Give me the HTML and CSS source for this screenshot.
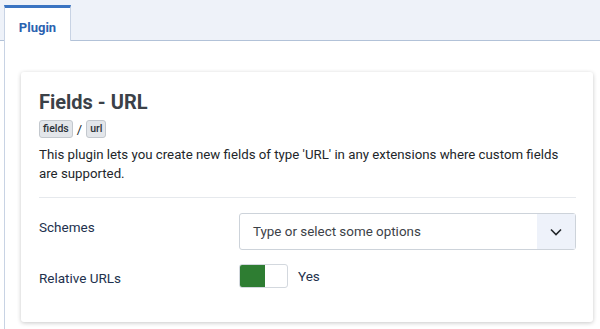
FILE: index.html
```html
<!DOCTYPE html>
<html lang="en">
<head>
    <meta charset="UTF-8">
    <title>Fields - URL</title>
    <link rel="stylesheet" href="styles.css">
</head>
<body>
    <div class="tabs">
        <div class="tab active">Plugin</div>
    </div>
    <div class="panel">
        <div class="card">
            <h1>Fields - URL</h1>
            <div class="badges">
                <span class="badge">fields</span>
                <span class="sep">/</span>
                <span class="badge">url</span>
            </div>
            <p class="desc">This plugin lets you create new fields of type 'URL' in any extensions where custom fields are supported.</p>
            <hr>
            <div class="row">
                <label>Schemes</label>
                <div class="select">
                    <span>Type or select some options</span>
                    <span class="caret">
                        <svg width="12" height="8" viewBox="0 0 12 8"><path d="M1 1.5 6 6.5 11 1.5" fill="none" stroke="#22262a" stroke-width="1.6"/></svg>
                    </span>
                </div>
            </div>
            <div class="row">
                <label>Relative URLs</label>
                <div class="switch-wrap">
                    <span class="switch"><span class="on"></span></span>
                    <span class="yes">Yes</span>
                </div>
            </div>
        </div>
    </div>
</body>
</html>
```

FILE: styles.css
```css
* {
    box-sizing: border-box;
}

body {
    margin: 0;
    font-family: Roboto, "Liberation Sans", sans-serif;
    background: #fff;
    color: #22262a;
}

.tabs {
    display: flex;
    height: 41px;
    padding: 5px 0 0 4px;
    background: #eef2f9;
    border-bottom: 1px solid #b2c2d8;
}

.tab {
    width: 67px;
    height: 36px;
    background: #fff;
    border-top: 3px solid #3a74c2;
    border-left: 1px solid #c8d3e4;
    border-right: 1px solid #c8d3e4;
    color: #2a62b0;
    font-weight: bold;
    font-size: 13px;
    text-align: center;
    padding-top: 12px;
}

.panel {
    margin-left: 4px;
    border-left: 1px solid #c8d3e4;
    padding: 31px 7px 8px 16px;
}

.card {
    background: #fff;
    border-radius: 3px;
    box-shadow: 0 1px 4px rgba(0, 0, 0, 0.22);
    padding: 18px 17px 34px 18px;
}

h1 {
    margin: 0;
    font-size: 20px;
    line-height: 24px;
    color: #3b4148;
}

.badges {
    display: flex;
    align-items: center;
    gap: 4px;
    margin-top: 6px;
}

.badge {
    font-size: 10.5px;
    font-weight: 500;
    line-height: 14px;
    padding: 1px 3px;
    background: #e3e6ea;
    border: 1px solid #c3c8ce;
    border-radius: 3px;
    color: #2c3238;
}

.sep {
    font-size: 13px;
    color: #22262a;
}

.desc {
    margin: 7px 0 0;
    font-size: 13.25px;
    line-height: 19px;
    color: #22262a;
}

hr {
    border: none;
    border-top: 1px solid #e6e9ed;
    margin: 14px 0 15px;
}

.row {
    display: flex;
    align-items: flex-start;
    margin-bottom: 14px;
}

.row:last-child {
    margin-bottom: 0;
}

label {
    width: 200px;
    padding-top: 4px;
    font-size: 13.5px;
    line-height: 20px;
    color: #22314d;
}

.select {
    flex: 1;
    display: flex;
    align-items: center;
    height: 37px;
    border: 1px solid #cdd3da;
    border-radius: 3px;
    font-size: 13.4px;
    color: #3c4147;
}

.select span:first-child {
    flex: 1;
    padding-left: 13px;
}

.caret {
    width: 38px;
    height: 100%;
    background: #eef2fa;
    display: flex;
    align-items: center;
    justify-content: center;
}

.switch-wrap {
    display: flex;
    align-items: center;
    gap: 10px;
}

.switch {
    display: block;
    width: 49px;
    height: 24px;
    border: 1px solid #d3d8de;
    border-radius: 3px;
    overflow: hidden;
}

.on {
    display: block;
    width: 25px;
    height: 100%;
    background: #2e7d32;
}

.yes {
    font-size: 13.5px;
    color: #22314d;
}
```
